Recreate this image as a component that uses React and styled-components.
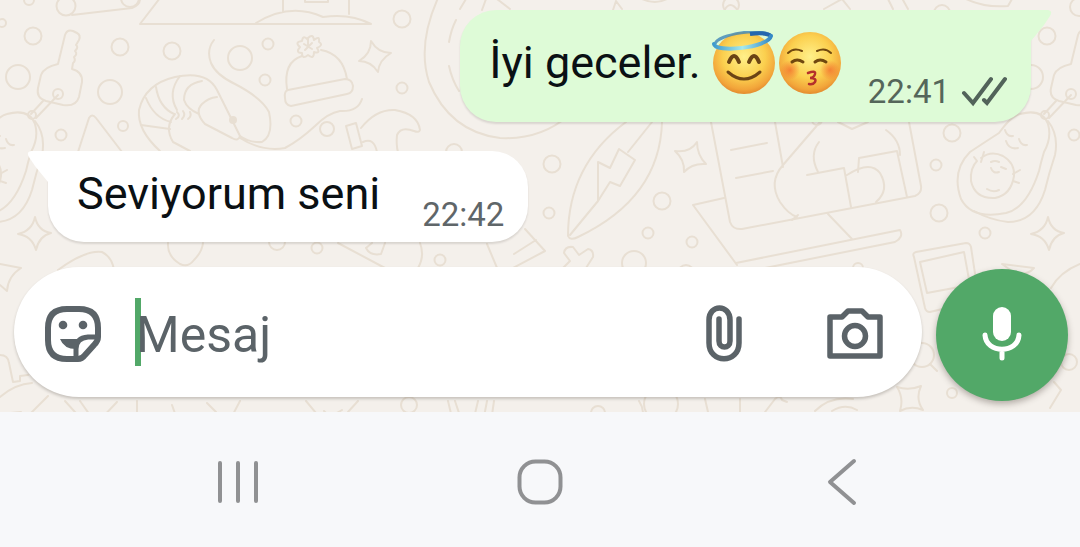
import React from "react";
import styled, { createGlobalStyle } from "styled-components";

const GlobalStyle = createGlobalStyle`
  * {
    box-sizing: border-box;
  }

  body {
    margin: 0;
    background: #f7f8fa;
    font-family: Roboto, "Liberation Sans", sans-serif;
  }
`;

const Page = styled.div`
  display: flex;
  flex-direction: column;
  min-height: 100vh;
`;

const Chat = styled.main`
  position: relative;
  isolation: isolate;
  display: flex;
  flex-direction: column;
  padding: 10px 12px 11px 14px;
  overflow: hidden;
  background: #f4f0eb;
`;

const Wallpaper = styled.svg`
  position: absolute;
  inset: 0;
  z-index: -1;
  width: 100%;
  height: 100%;
  fill: none;
  stroke: #e8dfd3;
  stroke-width: 2;
  stroke-linecap: round;
  stroke-linejoin: round;
`;

const Bubble = styled.article`
  position: relative;
  display: flex;
  align-items: flex-end;
  gap: ${(props) => (props.$out ? "24px" : "42px")};
  align-self: ${(props) => (props.$out ? "flex-end" : "flex-start")};
  margin: ${(props) => (props.$out ? "0 37px 0 0" : "29px 0 0 34px")};
  padding: ${(props) => (props.$out ? "0 24px 10px 29px" : "0 24px 7px 29px")};
  border-radius: ${(props) =>
    props.$out ? "36px 0 36px 36px" : "0 36px 36px 36px"};
  background: ${(props) => (props.$out ? "#defbd7" : "#ffffff")};
  box-shadow: 0 2px 2px rgba(60, 50, 40, 0.14);
`;

const Tail = styled.svg`
  position: absolute;
  top: 0;
  width: 22px;
  height: 32px;
  fill: ${(props) => (props.$out ? "#defbd7" : "#ffffff")};
  ${(props) =>
    props.$out ? "left: 100%;" : "right: 100%; transform: scaleX(-1);"}
`;

const Text = styled.p`
  display: flex;
  align-items: center;
  margin: 0;
  padding: ${(props) => (props.$out ? "21px 0 17px" : "17px 0 15px")};
  font-size: 45px;
  line-height: 52px;
  color: #0a1014;
  white-space: pre;
`;

const Emoji = styled.svg`
  width: 66px;
  height: 64px;
`;

const Meta = styled.div`
  display: flex;
  align-items: center;
  gap: 11px;
  font-size: 33px;
  line-height: 40px;
  color: ${(props) => (props.$out ? "#55665a" : "#5f6669")};
`;

const Ticks = styled.svg`
  width: 46px;
  height: 32px;
  fill: none;
  stroke: #52635a;
  stroke-width: 4;
  stroke-linecap: round;
`;

const Composer = styled.form`
  display: flex;
  align-items: flex-start;
  gap: 14px;
  margin-top: 25px;
`;

const Field = styled.div`
  display: flex;
  flex: 1;
  align-items: center;
  min-width: 0;
  height: 130px;
  padding: 0 38px 0 30px;
  border-radius: 65px;
  background: #ffffff;
  box-shadow: 0 2px 3px rgba(60, 50, 40, 0.24);
`;

const IconButton = styled.button`
  display: flex;
  flex: none;
  padding: 4px 0 0;
  border: 0;
  background: none;
  color: #5b6368;
  cursor: pointer;

  svg {
    width: 58px;
    height: 58px;
    fill: none;
    stroke: currentColor;
    stroke-width: 6;
    stroke-linecap: round;
    stroke-linejoin: round;
  }
`;

const Caret = styled.span`
  flex: none;
  width: 6px;
  height: 68px;
  margin-left: 33px;
  background: #52a868;
`;

const Input = styled.input`
  flex: 1;
  min-width: 0;
  margin-left: -5px;
  padding: 6px 0 0;
  border: 0;
  outline: 0;
  background: transparent;
  font-family: inherit;
  font-size: 50px;
  line-height: 60px;
  color: #0a1014;
  caret-color: #52a868;

  &::placeholder {
    color: #5b6368;
    opacity: 1;
  }
`;

const Actions = styled.div`
  display: flex;
  gap: 73px;
`;

const MicButton = styled.button`
  display: flex;
  flex: none;
  align-items: center;
  justify-content: center;
  width: 132px;
  height: 132px;
  margin-top: 2px;
  padding: 0;
  border: 0;
  border-radius: 50%;
  background: #52a868;
  box-shadow: 0 3px 6px rgba(60, 50, 40, 0.35);
  cursor: pointer;

  svg {
    width: 60px;
    height: 60px;
  }
`;

const NavBar = styled.nav`
  display: grid;
  flex: 1;
  grid-template-columns: repeat(3, 1fr);
  align-items: start;
  justify-items: center;
  padding: 46px 8% 41px;
  background: #f7f8fa;
`;

const NavButton = styled.button`
  display: flex;
  padding: 0;
  border: 0;
  background: none;
  cursor: pointer;

  svg {
    width: 48px;
    height: 48px;
    fill: none;
    stroke: #909193;
    stroke-width: 4;
    stroke-linecap: round;
    stroke-linejoin: round;
  }
`;

const dots = [
  [33, 36, 8.5], [2, 23, 4], [120, 47, 8.5], [110, 92, 12], [123, 126, 5],
  [172, 51, 8.5], [240, 58, 12], [268, 44, 5.5], [265, 80, 5.5], [66, 6, 9.5],
  [130, -2, 9], [29, 0, 5], [402, 19, 8.5], [402, 88, 5.5], [296, 121, 5.5],
  [327, 129, 7], [454, 152, 8], [1047, 36, 8.5], [952, 133, 8.5],
  [936, 165, 5.5], [939, 213, 8.5], [985, 233, 5.5], [1079, 7, 9],
  [942, 13, 8], [817, 120, 5], [858, 268, 5], [552, 164, 8.5],
  [549, 213, 5.5], [662, 201, 8.5], [648, 233, 5.5], [692, 242, 5.5],
  [634, 263, 12], [686, 273, 8], [277, 242, 8], [317, 248, 5.5],
  [440, 260, 5.5], [922, 355, 12], [952, 393, 5], [1069, 362, 8],
  [731, 5, 8], [409, 405, 8], [598, 413, 7], [661, 404, 17],
];

// avocado, keyring and sparkle come back at both ends of the tile
const TileEdge = () => (
  <>
    <circle cx="1031" cy="77" r="12" />
    <circle cx="1074" cy="135" r="5.5" />
    <path d="M1071 64 L1078 35 Q1080 29 1086 31 L1090 33 Q1094 35 1092 40 L1089 45 Q1092 47 1088 51 Q1091 54 1087 57 Q1089 61 1086 63 L1085 69 Q1096 72 1095 82 L1092 97 Q1089 107 1076 105 L1059 101 Q1049 98 1051 88 L1054 75 Q1057 67 1071 64" />
    <circle cx="1071" cy="94" r="5" />
    <path d="M1056 101 L1044 114 M1071 95 L1049 118" />
    <circle cx="1045" cy="115" r="4" />
    <path d="M1020 114 Q1042 108 1048 124 Q1052 138 1044 152 Q1041 162 1039 171 Q1027 208 1006 213 Q972 220 961 199 Q951 171 970 152 Q982 144 999 133 Q1011 116 1020 114 Z" />
    <path d="M1048 121 Q1059 135 1055 155 Q1049 173 1045 190 Q1035 222 1008 222 Q990 220 974 211" />
    <path d="M981 158 Q991 150 1003 156 Q1015 163 1014 176 Q1011 195 995 198 Q975 199 971 181 Q970 168 977 161 L974 157 M981 162 L984 152" />
    <path d="M1013 174 L1020 170 M1013 181 L1019 183 M1005 130 q2 7 8 6 M1019 139 q2 7 8 6 M1006 141 q3 9 12 7 M991 162 q4 -2 8 0 M1001 167 l5 2 M991 168 q2 6 8 4 M987 189 q6 4 12 1" />
    <path d="M1048 217 Q1051 231 1064 233 Q1052 236 1049 250 Q1045 236 1031 234 Q1045 231 1048 217 Z" />
  </>
);

const Doodles = () => (
  <Wallpaper viewBox="0 0 1080 412" preserveAspectRatio="xMinYMin slice" aria-hidden="true">
    {dots.map(([cx, cy, r]) => (
      <circle key={`${cx}-${cy}`} cx={cx} cy={cy} r={r} />
    ))}
    <TileEdge />
    <g transform="translate(-1013 0)">
      <TileEdge />
    </g>

    {/* top left row */}
    <path d="M72 15 L132 8 Q140 5 140 -1" />
    <path d="M160 -2 L140 24 H371 Q350 13 323 17 Q290 2 256 23 M283 -1 V12 M349 -1 V14 M305 -1 V2 H328 V-1" />
    <path d="M78 152 L89 118 Q92 113 96 118 L122 152" />

    {/* shrimp */}
    <path d="M160 151 Q137 130 139 110 Q145 84 175 77 Q207 70 217 90 L240 136 Q238 142 232 138 L205 124 Q194 112 202 104 Q208 98 217 97" />
    <path d="M141 125 L170 129 M146 98 Q154 118 171 122 M156 87 Q159 107 174 114 M180 76 Q167 93 177 110 M202 81 Q184 84 184 100 Q187 109 199 114 M175 114 Q164 127 173 142 L190 151 M176 119 q5 -3 1 -7 M182 119 q4 -4 1 -8 M188 119 q4 -3 2 -7" />
    <circle cx="233" cy="120" r="3" fill="#e8dfd3" />
    <path d="M214 40 Q206 50 211 63 Q216 75 235 84 Q262 98 269 112 Q274 135 262 142 Q250 143 240 136 M240 138 Q262 152 285 148 Q300 140 315 126 Q328 113 340 111 Q358 112 362 99" />

    {/* beanie */}
    <path d="M287 89 Q283 62 302 56 M321 50 Q343 54 347 79 M288 90 L345 79 Q352 79 353 86 Q353 93 347 94 L291 106 Q285 105 285 98 Q284 91 288 90 Z" />
    <path d="M308 45 L308 38 Q313 33 314 40 Q320 35 319 42 Q324 45 317 48 Q321 54 314 52 Q314 60 308 55 Q302 60 302 53 Q295 53 300 47 Q294 42 302 41 Q303 34 308 40 M304 44 l8 5 M312 43 l-7 7" />
    <path d="M371 41 Q378 53 391 53 Q379 60 378 72 Q371 61 359 61 Q371 54 371 41 Z" />

    {/* hammer */}
    <path d="M361 128 Q376 109 395 110 Q418 114 420 130 Q419 133 414 131 Q401 126 397 135 Q396 145 398 152 M346 126 L356 123 L362 146 L352 149 Z M363 142 Q374 137 377 152" />
    <path d="M438 -2 Q417 45 429 82 Q450 132 500 138 Q540 140 568 116 M456 20 Q451 30 449 42 M449 66 Q452 80 459 91" />
    <path d="M466 -1 L460 9 M486 -1 L482 10 M497 -1 L510 9 M613 10 L616 1 L622 9 M642 -1 Q655 5 667 -1 M724 11 q6 -12 14 0" />
    <path d="M824 9 L842 -1 L850 9 M888 -1 L893 9 M903 0 L908 9 M966 -1 Q985 8 1008 6 L1012 -1" />

    {/* surfboard */}
    <path d="M652 122 L628 152 M626 122 Q568 165 568 236 Q570 241 578 237 Q660 198 662 122 M570 235 L598 201 V162 L610 168 L619 149 L635 160 L620 186 L610 182 L598 201" />
    <path d="M675 151 Q690 153 697 142 Q697 155 706 164 Q692 163 684 172 Q685 160 675 151 Z" />

    {/* laptop */}
    <path d="M711 122 L730 222 Q733 230 742 229 L915 196 Q922 193 921 186 L909 122 M724 198 L693 205 L737 265 M736 263 L900 230 Q904 237 895 242 L765 268 M828 214 L852 239 M731 150 L767 143 M736 178 L773 171" />
    <path d="M775 122 L783 167 M820 122 L783 165 Q768 182 780 202 Q788 214 797 217 M819 142 Q809 155 818 172 M807 175 L844 168 L851 207 M847 175 Q870 160 880 173 Q890 190 876 202 M858 172 L859 158 L897 151 L907 197 M886 130 Q900 140 900 155 M838 122 L852 129 L868 122 M792 220 l6 -5" />

    {/* cross and blocks */}
    <path d="M563 268 L570 261 L564 253 Q565 246 573 247 L579 255 L588 249 Q594 250 593 257 L586 268 M525 229 L545 251 L500 275 M487 244 L500 275 M536 240 L514 254" />
    <path d="M168 243 Q167 256 180 264 Q188 268 194 260 Q202 252 203 243 M338 243 L385 268 M420 243 Q425 256 418 268 M366 248 L372 243 M366 248 Q370 256 381 254 L385 243" />
    <path d="M0 264 L21 268 Q8 276 7 291 L0 285 M58 270 Q85 250 102 252 Q112 257 114 270 M0 355 Q8 355 9 363 L13 382 L20 381 V376 L28 375" />

    {/* photo frame and sparkle */}
    <path d="M914 257 Q912 253 916 252 L966 243 Q970 243 971 247 L979 300 L930 312 Q926 312 925 308 Z M920 262 L964 252 L970 285 L927 293 Z M930 364 L937 371" />
    <path d="M1002 264 L1034 268 Q1028 275 1016 274 Z M1051 288 Q1060 272 1080 264 M1054 382 L1061 390 L1050 408 M897 387 Q909 391 921 386 Q915 399 923 410 Q911 405 900 411 Q904 398 897 387 Z" />

    {/* bottom edge */}
    <path d="M0 397 Q15 384 32 383 M0 414 L21 412 V422 M48 396 L30 414 M65 401 L84 422 M80 401 L92 418 M117 402 L98 422 M137 401 V422 M172 405 L178 422 M207 403 L216 412 M240 401 L229 422 M306 401 L316 413 L308 424 M358 401 L348 412 L356 424 M324 411 L330 417 L342 410" />
    <path d="M448 401 L453 422 M455 401 L462 422 M478 401 L473 422 M487 401 L483 422 M494 401 L491 422 M639 401 Q645 410 642 420 M705 399 L708 412 M740 399 V412 M765 412 L775 399 Q780 394 782 400 L787 402 M815 411 Q830 396 853 399 M832 411 Q845 403 857 410" />
  </Wallpaper>
);

const FaceGradient = ({ id }) => (
  <radialGradient id={id} cx="50%" cy="40%" r="62%">
    <stop offset="0" stopColor="#fff08a" />
    <stop offset="0.55" stopColor="#fbd04f" />
    <stop offset="0.85" stopColor="#f2a53a" />
    <stop offset="1" stopColor="#e0842b" />
  </radialGradient>
);

const HaloEmoji = () => (
  <Emoji viewBox="0 0 66 64" role="img" aria-label="😇">
    <defs>
      <FaceGradient id="halo-face" />
      <linearGradient id="halo-ring" x1="0" x2="1">
        <stop offset="0" stopColor="#3f9bcd" />
        <stop offset="0.5" stopColor="#a5e9ee" />
        <stop offset="1" stopColor="#3489c6" />
      </linearGradient>
    </defs>
    <circle cx="32" cy="32" r="31" fill="url(#halo-face)" />
    <path d="M3 13 C5 3 52 -4 59 5" fill="none" stroke="#3f86b8" strokeWidth="3" opacity="0.8" />
    <path d="M38 3 Q54 1 59 5" fill="none" stroke="#2467ae" strokeWidth="4" />
    <path d="M2 13 C3 22 56 17 59 5" fill="none" stroke="url(#halo-ring)" strokeWidth="4" strokeLinecap="round" />
    <g fill="none" stroke="#6b4415" strokeLinecap="round">
      <path d="M17 31 Q22 19 27 31 M37 31 Q42 19 47 31" strokeWidth="4" />
      <path d="M16 41 Q32 55 48 41" strokeWidth="3" />
    </g>
  </Emoji>
);

const KissEmoji = () => (
  <Emoji viewBox="0 0 66 64" role="img" aria-label="😚">
    <defs>
      <FaceGradient id="kiss-face" />
      <radialGradient id="kiss-blush">
        <stop offset="0" stopColor="#f2652b" stopOpacity="0.7" />
        <stop offset="1" stopColor="#f2652b" stopOpacity="0" />
      </radialGradient>
    </defs>
    <circle cx="32" cy="32" r="31" fill="url(#kiss-face)" />
    <circle cx="12" cy="39" r="10" fill="url(#kiss-blush)" />
    <circle cx="52" cy="39" r="10" fill="url(#kiss-blush)" />
    <g fill="none" stroke="#70480f" strokeLinecap="round">
      <path d="M10 22 Q16 16 24 20 M39 20 Q47 16 53 22" strokeWidth="2" />
      <path d="M14 31 Q19 27 25 31 M37 31 Q42 27 48 31" strokeWidth="3" />
    </g>
    <path d="M30 42 Q38 39 37 43 Q36 47 32 47 Q39 47 37 51 Q35 54 31 53" fill="none" stroke="#b5302b" strokeWidth="2.5" strokeLinecap="round" />
  </Emoji>
);

const BubbleTail = ({ out }) => (
  <Tail $out={out} viewBox="0 0 22 32" aria-hidden="true">
    <path d="M-1 0 H17 Q22 1 19 6 Q17 9 13 15 L0 31 H-1 Z" />
  </Tail>
);

const App = () => {
  return (
    <>
      <GlobalStyle />
      <Page>
        <Chat>
          <Doodles />
          <Bubble $out>
            <BubbleTail out />
            <Text $out>
              İyi geceler. <HaloEmoji />
              <KissEmoji />
            </Text>
            <Meta $out>
              <time>22:41</time>
              <Ticks viewBox="0 0 46 32" role="img" aria-label="İletildi">
                <path d="M3 17 L12 27 L30 3 M23 24 L26 27 L44 3" />
              </Ticks>
            </Meta>
          </Bubble>
          <Bubble>
            <BubbleTail />
            <Text>Seviyorum seni</Text>
            <Meta>
              <time>22:42</time>
            </Meta>
          </Bubble>
          <Composer onSubmit={(e) => e.preventDefault()}>
            <Field>
              <IconButton type="button" aria-label="Çıkartma">
                <svg viewBox="0 0 58 58">
                  <path d="M35 54 H23 Q4 54 4 35 V23 Q4 4 23 4 H35 Q54 4 54 23 V32 Q54 36 50 40 L41 50 Q38 54 34 54 Z" />
                  <path d="M53 32 H44 Q32 33 32 44 V53" strokeWidth="5" />
                  <path d="M16 34 H38 Q32 38 32 44 Q20 44 16 34 Z" fill="currentColor" stroke="none" />
                  <circle cx="19" cy="20" r="4.3" fill="currentColor" stroke="none" />
                  <circle cx="39" cy="20" r="4.3" fill="currentColor" stroke="none" />
                </svg>
              </IconButton>
              <Caret aria-hidden="true" />
              <Input type="text" placeholder="Mesaj" aria-label="Mesaj" />
              <Actions>
                <IconButton type="button" aria-label="Ekle">
                  <svg viewBox="0 0 58 58">
                    <path d="M44 14 V38 C44 59 14 59 14 38 V15 C14 -1 35 -1 35 15 V36 C35 44 24 44 24 36 V14" strokeWidth="5.5" />
                  </svg>
                </IconButton>
                <IconButton type="button" aria-label="Kamera">
                  <svg viewBox="0 0 58 58">
                    <path d="M4 12 H16 L22 6 H36 L42 12 H54 V51 H4 Z" strokeWidth="5.5" />
                    <circle cx="29" cy="31" r="10.5" strokeWidth="5.5" />
                  </svg>
                </IconButton>
              </Actions>
            </Field>
            <MicButton type="button" aria-label="Sesli mesaj">
              <svg viewBox="0 0 60 60" fill="none" stroke="#ffffff" strokeLinecap="round">
                <rect x="21" y="2" width="18" height="34" rx="9" fill="#ffffff" stroke="none" />
                <path d="M13 30 C14 49 46 49 47 30 M30 45 V53" strokeWidth="5" />
              </svg>
            </MicButton>
          </Composer>
        </Chat>
        <NavBar>
          <NavButton type="button" aria-label="Son uygulamalar">
            <svg viewBox="0 0 48 48">
              <path d="M6 5 V43 M24 5 V43 M42 5 V43" />
            </svg>
          </NavButton>
          <NavButton type="button" aria-label="Ana ekran">
            <svg viewBox="0 0 48 48">
              <rect x="3.5" y="3.5" width="41" height="41" rx="16" />
            </svg>
          </NavButton>
          <NavButton type="button" aria-label="Geri">
            <svg viewBox="0 0 48 48">
              <path d="M36 3 L12 24 L36 45" />
            </svg>
          </NavButton>
        </NavBar>
      </Page>
    </>
  );
};

export default App;
